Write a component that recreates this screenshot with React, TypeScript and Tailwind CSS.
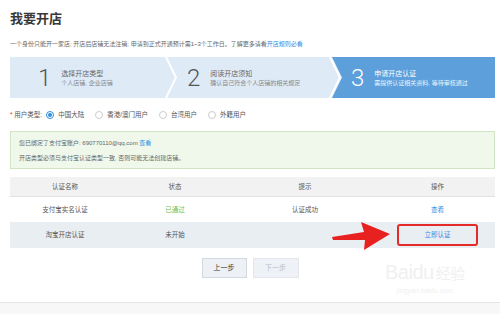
import React from 'react';

const font = "font-['Liberation_Sans','Noto_Sans_CJK_SC',sans-serif]";

function Chevron({ last }: { last?: boolean }) {
  return (
    <svg width="14" height="41" viewBox="0 0 14 41" className="shrink-0 block">
      <rect width="14" height="41" fill="#dfeaf7" />
      {last && <polygon points="3,0 14,0 14,41 3,41 13,20.5" fill="#5d9fdb" />}
      <polyline points="1,0 11,20.5 1,41" fill="none" stroke="#fff" strokeWidth="2" />
    </svg>
  );
}

function Step({ num, title, sub, active, className }: { num: string; title: string; sub: string; active?: boolean; className: string }) {
  return (
    <div className={`flex items-center h-full ${active ? 'bg-[#5d9fdb]' : 'bg-[#dfeaf7]'} ${className}`}>
      <span className={`font-['Roboto',sans-serif] font-light text-[24px] leading-none ${active ? 'text-white' : 'text-[#555]'}`}>{num}</span>
      <div className="ml-[10px] flex flex-col gap-[3px]">
        <span className={`text-[7px] leading-none ${active ? 'text-white' : 'text-[#666]'}`}>{title}</span>
        <span className={`text-[6px] leading-none ${active ? 'text-[#eef5fc]' : 'text-[#888]'}`}>{sub}</span>
      </div>
    </div>
  );
}

function Radio({ label, checked }: { label: string; checked?: boolean }) {
  return (
    <span className="flex items-center gap-[4px]">
      <span className={`w-[8px] h-[8px] rounded-full border flex items-center justify-center bg-white ${checked ? 'border-[#2f8ee0]' : 'border-[#ccc]'}`}>
        {checked && <span className="w-[4px] h-[4px] rounded-full bg-[#2f8ee0]" />}
      </span>
      <span className="text-[6.5px] text-[#555]">{label}</span>
    </span>
  );
}

export default function App() {
  const rows = [
    { name: '支付宝实名认证', status: '已通过', ok: true, tip: '认证成功', op: '查看' },
    { name: '淘宝开店认证', status: '未开始', ok: false, tip: '', op: '立即认证' },
  ];
  return (
    <div className={`relative h-[314px] w-[500px] overflow-hidden bg-white flex flex-col ${font}`}>
      <div className="pl-[10px] pr-[5px] flex flex-col">
        <div className="h-[38px] pt-[11px]">
          <h1 className="text-[13px] leading-[16px] font-bold text-[#383838]">我要开店</h1>
        </div>
        <p className="h-[12px] text-[6px] leading-[12px] text-[#666]">
          一个身份只能开一家店; 开店后店铺无法注销; 申请到正式开通预计需1~3个工作日。了解更多请看
          <span className="text-[#2e8de6]">开店规则必看</span>
        </p>

        <div className="mt-[7px] h-[41px] flex">
          <Step num="1" title="选择开店类型" sub="个人店铺, 企业店铺" className="w-[155px] pl-[28px]" />
          <Chevron />
          <Step num="2" title="阅读开店须知" sub="确认自己符合个人店铺的相关规定" className="w-[150px] pl-[8px]" />
          <Chevron last />
          <Step num="3" title="申请开店认证" sub="需提供认证相关资料, 等待审核通过" active className="flex-1 pl-[8px]" />
        </div>

        <div className="mt-[9px] h-[16px] flex items-center">
          <span className="text-[6.5px] text-[#555] mr-[4px]">
            <span className="text-[#e4393c]">*</span> 用户类型:
          </span>
          <div className="flex items-center gap-[11px]">
            <Radio label="中国大陆" checked />
            <Radio label="香港/澳门用户" />
            <Radio label="台湾用户" />
            <Radio label="外籍用户" />
          </div>
        </div>

        <div className="mt-[8px] h-[38px] border border-[#cfe5c3] bg-[#eff8ea] pl-[8px] flex flex-col justify-center gap-[5px]">
          <span className="text-[6px] leading-[10px] text-[#666]">
            您已绑定了支付宝账户: 690770110@qq.com <span className="text-[#2e8de6]">查看</span>
          </span>
          <span className="text-[6px] leading-[10px] text-[#666]">开店类型必须与支付宝认证类型一致, 否则可能无法创建店铺。</span>
        </div>

        <div className="mt-[8px] flex flex-col text-[6.5px] text-[#555]">
          <div className="h-[20px] bg-[#f2f2f2] border-b border-[#e2e2e2] grid grid-cols-[110px_110px_150px_1fr] items-center text-center">
            <span>认证名称</span>
            <span>状态</span>
            <span>提示</span>
            <span>操作</span>
          </div>
          {rows.map((r, i) => (
            <div
              key={r.name}
              className={`${i === 0 ? 'h-[25px] bg-white' : 'h-[26px] bg-[#e9eef3]'} grid grid-cols-[110px_110px_150px_1fr] items-center text-center`}
            >
              <span>{r.name}</span>
              <span className={r.ok ? 'text-[#6cbf4f]' : ''}>{r.status}</span>
              <span>{r.tip}</span>
              <span className="flex justify-center">
                {r.ok ? (
                  <span className="text-[#2e8de6]">{r.op}</span>
                ) : (
                  <span className="w-[81px] h-[22px] border-2 border-[#e52a2a] rounded-[3px] flex items-center justify-center text-[#2e8de6]">{r.op}</span>
                )}
              </span>
            </div>
          ))}
        </div>

        <div className="mt-[10px] h-[20px] flex justify-center gap-[6px] pr-[5px]">
          <button className="w-[45px] h-[20px] bg-[#edf1f5] border border-[#d3d9e0] text-[7px] text-[#333]">上一步</button>
          <button className="w-[46px] h-[20px] bg-[#eef2f6] border border-[#e3e7ec] text-[7px] text-[#b8bec5]">下一步</button>
        </div>
      </div>

      <div className="mt-auto h-[12px] border-t border-[#e4e4e4] bg-[#f7f7f7]" />

      {/* red arrow */}
      <svg className="absolute left-[330px] top-[220px]" width="62" height="32" viewBox="0 0 62 32">
        <polygon points="2,17 34,12 31,2 60,14 34,30 35,20 3,20" fill="#e8201f" />
      </svg>

      {/* watermark */}
      <div className="absolute left-[385px] top-[260px] flex flex-col items-center text-[#f0f0f0] pointer-events-none">
        <span className="text-[20px] leading-[24px] tracking-tight">Baidu<span className="text-[15px] ml-[2px]">经验</span></span>
        <span className="text-[7px] leading-[9px]">jingyan.baidu.com</span>
      </div>
    </div>
  );
}
